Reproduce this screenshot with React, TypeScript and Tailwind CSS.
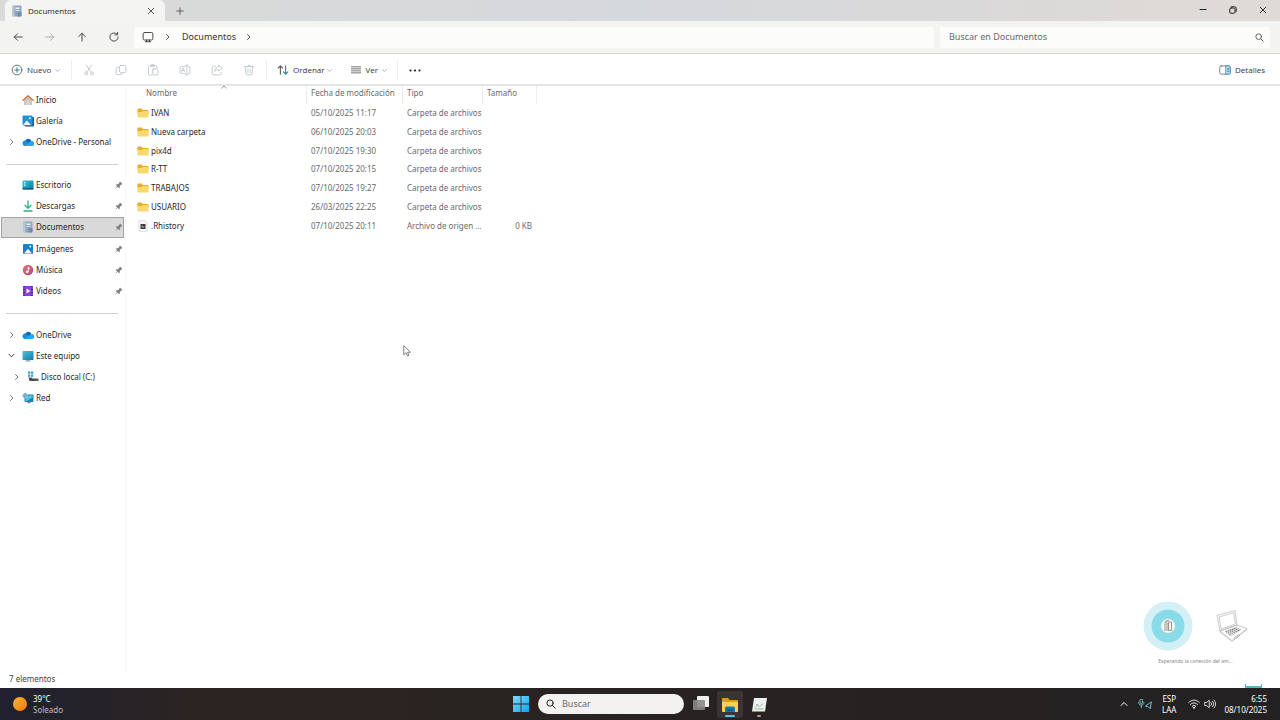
import type { ReactNode } from 'react';

type IconProps = { className?: string };

/* ---------- line icons ---------- */

function Line({ className = 'size-3', children, box = 16 }: { className?: string; children: ReactNode; box?: number }) {
  return (
    <svg
      viewBox={`0 0 ${box} ${box}`}
      className={className}
      fill="none"
      stroke="currentColor"
      strokeWidth="1.1"
      strokeLinecap="round"
      strokeLinejoin="round"
      aria-hidden="true"
    >
      {children}
    </svg>
  );
}

const BackIcon = () => <Line><path strokeWidth="1.300" d="M13.500 8H3M7.500 3.500 3 8l4.500 4.500" /></Line>;
const ForwardIcon = () => <Line><path strokeWidth="1.300" d="M2.500 8H13M8.500 3.500 13 8l-4.500 4.500" /></Line>;
const UpIcon = () => <Line><path strokeWidth="1.300" d="M8 13.500V3M3.500 7.500 8 3l4.500 4.500" /></Line>;
const RefreshIcon = () => <Line><path strokeWidth="1.300" d="M13.500 8A5.500 5.500 0 1 1 11.500 3.800M12.800 1.800v3.400H9.400" /></Line>;
const CloseIcon = ({ className = 'size-2' }: IconProps) => <Line className={className}><path strokeWidth="1.800" d="m2.500 2.500 11 11M13.500 2.500l-11 11" /></Line>;
const PlusIcon = () => <Line className="size-2"><path strokeWidth="1.600" d="M8 1.500v13M1.500 8h13" /></Line>;
const MinimizeIcon = () => <Line className="size-2"><path strokeWidth="2" d="M2 7h12" /></Line>;
const RestoreIcon = () => (
  <Line className="size-2">
    <rect x="1.500" y="4" width="10.500" height="10.500" rx="2.500" strokeWidth="2" />
    <path strokeWidth="2" d="M5 1.500h6a3.500 3.500 0 0 1 3.500 3.500v6" />
  </Line>
);
const ScreenIcon = () => (
  <Line>
    <rect x="1.500" y="2" width="13" height="10" rx="1.800" strokeWidth="1.300" />
    <path strokeWidth="1.300" d="M6 12v2.200M10 12v2.200M4.500 14.300h7" />
  </Line>
);
const ChevronRight = ({ className = 'size-2' }: IconProps) => <Line className={className}><path strokeWidth="1.800" d="m5 3 5 5-5 5" /></Line>;
const ChevronDown = ({ className = 'size-2' }: IconProps) => <Line className={className}><path strokeWidth="2" d="m2 5 6 6 6-6" /></Line>;
const ChevronUp = ({ className = 'size-2' }: IconProps) => <Line className={className}><path strokeWidth="2" d="m2 11 6-6 6 6" /></Line>;
const SearchIcon = ({ className = 'size-[9px]' }: IconProps) => (
  <Line className={className}>
    <circle cx="6.500" cy="6.500" r="5" strokeWidth="1.600" />
    <path strokeWidth="1.600" d="m10.200 10.200 4.600 4.600" />
  </Line>
);
const NewIcon = () => (
  <Line>
    <circle cx="8" cy="8" r="6.500" stroke="#555" />
    <path stroke="#277c9c" strokeWidth="1.300" d="M8 5v6M5 8h6" />
  </Line>
);
const CutIcon = () => (
  <Line>
    <circle cx="4" cy="12.500" r="2" />
    <circle cx="12" cy="12.500" r="2" />
    <path d="M5 10.800 11.500 1.500M11 10.800 4.500 1.500" />
  </Line>
);
const CopyIcon = () => (
  <Line>
    <rect x="6" y="2" width="8.500" height="9.500" rx="1.500" />
    <path d="M4.500 4.500H3A1.500 1.500 0 0 0 1.500 6v6.500A1.500 1.500 0 0 0 3 14h5a1.500 1.500 0 0 0 1.500-1" />
  </Line>
);
const PasteIcon = () => (
  <Line>
    <path d="M6 14.500H3.500A1.500 1.500 0 0 1 2 13V3.500A1.500 1.500 0 0 1 3.500 2h8A1.500 1.500 0 0 1 13 3.500V5M5.500 2V1h4v2.500h-4z" />
    <rect x="7.500" y="6.500" width="7" height="8" rx="1.300" />
  </Line>
);
const RenameIcon = () => (
  <Line>
    <path d="M8.500 3.500H3A1.500 1.500 0 0 0 1.500 5v6A1.500 1.500 0 0 0 3 12.500h5.500M12.500 3.500h.5A1.500 1.500 0 0 1 14.500 5v6a1.500 1.500 0 0 1-1.500 1.500h-.5M10.500 1.500v13M9 1.500h3M9 14.500h3M3.500 10 5.500 5.500 7.500 10M4.200 8.700h2.600" />
  </Line>
);
const ShareIcon = () => (
  <Line>
    <path d="M6 3H3.500A2 2 0 0 0 1.500 5v7.500a2 2 0 0 0 2 2h8a2 2 0 0 0 2-2V11M10 1.500l5 4-5 4V7.300c-2.600 0-4 .8-5 2.700.2-3.600 2-5.800 5-6.200z" />
  </Line>
);
const DeleteIcon = () => (
  <Line>
    <path d="M1.500 3.500h13M6 3.500a2 2 0 0 1 4 0M3 3.500l.9 9.500a1.500 1.500 0 0 0 1.500 1.500h5.200a1.500 1.500 0 0 0 1.500-1.500l.9-9.500M6.500 6.500v5M9.500 6.500v5" />
  </Line>
);
const SortIcon = () => (
  <Line>
    <path stroke="#555" strokeWidth="1.400" d="M4.500 13.500v-11M1.500 5.500l3-3 3 3" />
    <path stroke="#277c9c" strokeWidth="1.400" d="M11.500 2.500v11M8.500 10.500l3 3 3-3" />
  </Line>
);
const ViewIcon = () => (
  <svg viewBox="0 0 12 12" className="size-3" aria-hidden="true">
    <path fill="#cfcfcf" d="M1 2h10v8H1z" />
    <path stroke="#a6a6a6" d="M1 2.500h10M1 4.500h10M1 6.500h10M1 8.500h10" />
  </svg>
);
const DetailsIcon = () => (
  <Line>
    <rect x="1" y="2.500" width="14" height="11" rx="2" stroke="#666" />
    <path fill="#b9def2" stroke="#3d88b5" d="M9.500 2.500H13a2 2 0 0 1 2 2v7a2 2 0 0 1-2 2H9.500zM11.500 6H13M11.500 8H13M11.500 10H13" />
  </Line>
);
const PinIcon = () => (
  <svg viewBox="0 0 16 16" className="size-2" fill="#7d8083" aria-hidden="true">
    <path d="m10 1 5 5-1.500 1.200-1-.2-3 3 .2 3L8.200 14.500 5.300 11.600 1.500 15.200.800 14.500 4.400 10.700 1.500 7.800 3 6.300l3 .2 3-3-.2-1z" />
  </svg>
);

/* ---------- coloured icons ---------- */

const HomeIcon = () => (
  <svg viewBox="0 0 24 24" className="size-3" aria-hidden="true">
    <path fill="#c9c6c4" d="M4 11 12 4l8 7v11h-5.500v-7h-5v7H4z" />
    <path fill="#9c8e85" d="M9.500 15h5v7h-5z" opacity=".35" />
    <path fill="none" stroke="#d07a35" strokeWidth="3" strokeLinecap="round" strokeLinejoin="round" d="M2 12.500 12 3.500l10 9" />
  </svg>
);
const GalleryIcon = () => (
  <svg viewBox="0 0 24 24" className="size-3" aria-hidden="true">
    <rect x="5" y="4" width="19" height="19" rx="2" fill="#1b5e99" />
    <rect x="1" y="1" width="20" height="20" rx="2" fill="#2391d8" />
    <path fill="#e8f6fd" d="m2 20 7.500-9 8.500 9z" />
    <circle cx="15.500" cy="6.500" r="2" fill="#e8f6fd" />
  </svg>
);
const CloudIcon = () => (
  <svg viewBox="0 0 24 24" className="size-3" aria-hidden="true">
    <path fill="#1267b9" d="M7 9a6.500 6.500 0 0 1 12 1l-8 7-9-1A5 5 0 0 1 7 9z" />
    <path fill="#1490df" d="M2 12.500A5 5 0 0 1 8.500 10L19 18.500 17 20H6a5 5 0 0 1-4-7.500z" />
    <path fill="#28a8ea" d="M13 14.500 19 10a5 5 0 0 1 1 10H6z" />
  </svg>
);
const DesktopIcon = () => (
  <svg viewBox="0 0 24 24" className="size-3" aria-hidden="true">
    <defs>
      <linearGradient id="desk" x1="0" x2="1" y2="1">
        <stop stopColor="#35c6d0" />
        <stop offset="1" stopColor="#0f75a8" />
      </linearGradient>
    </defs>
    <rect x="1" y="3" width="22" height="18" rx="2" fill="url(#desk)" />
    <path fill="#c5f3f5" d="M4 6h3v3H4zM4 11h3v3H4z" />
    <path fill="#0d5f86" d="M1 18h22v1.500a1.500 1.500 0 0 1-1.500 1.500h-19A1.500 1.500 0 0 1 1 19.500z" />
  </svg>
);
const DownloadIcon = () => (
  <svg viewBox="0 0 24 24" className="size-3" fill="none" stroke="#2fb281" strokeWidth="2.600" strokeLinecap="round" strokeLinejoin="round" aria-hidden="true">
    <path d="M12 2v14M6 10.500l6 6 6-6M4 22h16" />
  </svg>
);
const DocumentIcon = ({ className = 'size-3' }: IconProps) => (
  <svg viewBox="0 0 24 24" className={className} aria-hidden="true">
    <rect x="3" y="1" width="18" height="22" rx="2" fill="#91a8c0" />
    <rect x="3" y="1" width="4" height="22" rx="1.500" fill="#b5c6d6" />
    <path fill="#e7f1f9" d="M9 5h8v3H9zM9 10h8v1.500H9z" />
    <path fill="#6f8cab" d="M13 14h8v7a2 2 0 0 1-2 2h-6z" />
  </svg>
);
const PicturesIcon = () => (
  <svg viewBox="0 0 24 24" className="size-3" aria-hidden="true">
    <rect x="2" y="2" width="20" height="20" rx="2.500" fill="#1c80c3" />
    <path fill="#f0f9fe" d="m4 21 8-9.500L20 21z" />
    <circle cx="16.500" cy="7" r="2" fill="#f0f9fe" />
  </svg>
);
const MusicIcon = () => (
  <svg viewBox="0 0 24 24" className="size-3" aria-hidden="true">
    <defs>
      <linearGradient id="music" x1="0" x2="1" y2="1">
        <stop stopColor="#e2716b" />
        <stop offset="1" stopColor="#b04b86" />
      </linearGradient>
    </defs>
    <circle cx="12" cy="12" r="10.500" fill="url(#music)" />
    <circle cx="10.500" cy="15.500" r="2.700" fill="#fff" />
    <path fill="#fff" d="M11.500 5.500h1.700c.3 1.800 1.200 2.700 3 3v2c-1.300 0-2.300-.4-3-1v6h-1.700z" />
  </svg>
);
const VideosIcon = () => (
  <svg viewBox="0 0 24 24" className="size-3" aria-hidden="true">
    <rect x="2" y="2" width="20" height="20" rx="2" fill="#8a3ed6" />
    <path fill="#5a1ea6" d="M2 4a2 2 0 0 1 2-2h2v20H4a2 2 0 0 1-2-2zM18 2h2a2 2 0 0 1 2 2v16a2 2 0 0 1-2 2h-2z" />
    <path fill="#e3c8fb" d="M3 5h2v2H3zM3 11h2v2H3zM3 17h2v2H3zM19 5h2v2h-2zM19 11h2v2h-2zM19 17h2v2h-2z" />
    <path fill="#fff" d="m9 7 8 5-8 5z" />
  </svg>
);
const ComputerIcon = () => (
  <svg viewBox="0 0 24 24" className="size-3" aria-hidden="true">
    <defs>
      <linearGradient id="pc" x1="0" x2="1" y2="1">
        <stop stopColor="#45c9da" />
        <stop offset="1" stopColor="#1478a6" />
      </linearGradient>
    </defs>
    <rect x="1" y="2" width="22" height="18" rx="1.500" fill="url(#pc)" />
    <path fill="#8fa6b2" d="M9 20h6v1.500h3V23H6v-1.500h3z" />
  </svg>
);
const DiskIcon = () => (
  <svg viewBox="0 0 24 24" className="size-3" aria-hidden="true">
    <path fill="#27a3dd" d="M2 1h4.500v4.500H2zM8 1h4.500v4.500H8zM2 7h4.500v4.500H2zM8 7h4.500v4.500H8z" />
    <path fill="#4a4f53" d="M3 13h6l2 2h12v5H5z" />
    <path fill="#54d08b" d="M18 17h3v1.500h-3z" />
  </svg>
);
const NetworkIcon = () => (
  <svg viewBox="0 0 24 24" className="size-3" aria-hidden="true">
    <rect x="5" y="5" width="18" height="15" rx="1.500" fill="#1c87b5" />
    <path fill="#52c6dc" d="M7 7h14v4L10 18H7z" />
    <circle cx="6.500" cy="7.500" r="5.500" fill="#a4d4e6" />
    <path fill="none" stroke="#367fa8" d="M1 7.500h11M6.500 2c-3 3.500-3 7.500 0 11M6.500 2c3 3.500 3 7.500 0 11" />
    <path fill="#6d8796" d="M11 20h6v2.500h-6z" />
  </svg>
);
const FolderIcon = () => (
  <svg viewBox="0 0 24 24" className="size-3" aria-hidden="true">
    <path fill="#e3ac2c" d="M1 4.500A1.500 1.500 0 0 1 2.500 3h6.500l2.500 3H21.500A1.500 1.500 0 0 1 23 7.500V13H1z" />
    <path fill="#fbd86b" d="M1 10h8l2.500-2H23v11.500a1.500 1.500 0 0 1-1.500 1.500h-19A1.500 1.500 0 0 1 1 19.500z" />
  </svg>
);
const FileIcon = () => (
  <svg viewBox="0 0 24 24" className="size-3" aria-hidden="true">
    <path fill="#fafafa" stroke="#b9b9b9" d="M4 1.500h12l4 4v17H4z" />
    <path fill="#36393b" d="M7 8h10v10H7z" />
    <path fill="#a5adb2" d="M9 10.500h2v5H9zM12.500 12h2v3.500h-2z" />
  </svg>
);

/* ---------- data ---------- */

type NavEntry = { label: string; icon: ReactNode; pinned?: boolean; chevron?: 'right' | 'down'; nested?: boolean; active?: boolean };

const topLinks: NavEntry[] = [
  { label: 'Inicio', icon: <HomeIcon /> },
  { label: 'Galería', icon: <GalleryIcon /> },
  { label: 'OneDrive - Personal', icon: <CloudIcon />, chevron: 'right' },
];
const quickLinks: NavEntry[] = [
  { label: 'Escritorio', icon: <DesktopIcon />, pinned: true },
  { label: 'Descargas', icon: <DownloadIcon />, pinned: true },
  { label: 'Documentos', icon: <DocumentIcon />, pinned: true, active: true },
  { label: 'Imágenes', icon: <PicturesIcon />, pinned: true },
  { label: 'Música', icon: <MusicIcon />, pinned: true },
  { label: 'Videos', icon: <VideosIcon />, pinned: true },
];
const deviceLinks: NavEntry[] = [
  { label: 'OneDrive', icon: <CloudIcon />, chevron: 'right' },
  { label: 'Este equipo', icon: <ComputerIcon />, chevron: 'down' },
  { label: 'Disco local (C:)', icon: <DiskIcon />, chevron: 'right', nested: true },
  { label: 'Red', icon: <NetworkIcon />, chevron: 'right' },
];

const files = [
  { name: 'IVAN', date: '05/10/2025 11:17', type: 'Carpeta de archivos', size: '' },
  { name: 'Nueva carpeta', date: '06/10/2025 20:03', type: 'Carpeta de archivos', size: '' },
  { name: 'pix4d', date: '07/10/2025 19:30', type: 'Carpeta de archivos', size: '' },
  { name: 'R-TT', date: '07/10/2025 20:15', type: 'Carpeta de archivos', size: '' },
  { name: 'TRABAJOS', date: '07/10/2025 19:27', type: 'Carpeta de archivos', size: '' },
  { name: 'USUARIO', date: '26/03/2025 22:25', type: 'Carpeta de archivos', size: '' },
  { name: '.Rhistory', date: '07/10/2025 20:11', type: 'Archivo de origen ...', size: '0 KB' },
];

const fileActions = [
  { label: 'Cortar', icon: <CutIcon /> },
  { label: 'Copiar', icon: <CopyIcon /> },
  { label: 'Pegar', icon: <PasteIcon /> },
  { label: 'Cambiar nombre', icon: <RenameIcon /> },
  { label: 'Compartir', icon: <ShareIcon /> },
  { label: 'Eliminar', icon: <DeleteIcon /> },
];

/* ---------- window parts ---------- */

function TitleBar() {
  return (
    <header className="flex h-[21px] items-stretch bg-linear-to-r from-[#dadad8] via-[#d5d8dc] to-[#dfdad6] font-['Open_Sans','Noto_Sans',sans-serif]">
      <div className="ml-[5px] flex w-40 items-center rounded-t-md bg-[#f4f5f3] pr-2 pl-1.5">
        <DocumentIcon className="size-3" />
        <span className="ml-[5px] flex-1 font-medium text-[#222]">Documentos</span>
        <button aria-label="Cerrar pestaña" className="p-0.5 text-[#444]"><CloseIcon /></button>
      </div>
      <button aria-label="Nueva pestaña" className="px-[11px] text-[#444]"><PlusIcon /></button>
      <div className="ml-auto flex items-stretch pb-0.5 text-[#222]">
        <button aria-label="Minimizar" className="w-[30px] pl-[11px]"><MinimizeIcon /></button>
        <button aria-label="Restaurar" className="w-[30px] pl-[11px]"><RestoreIcon /></button>
        <button aria-label="Cerrar" className="w-[32px] pl-[11px]"><CloseIcon /></button>
      </div>
    </header>
  );
}

function AddressBar() {
  return (
    <div className="flex h-[33px] items-center border-b border-[#d9d9d9] bg-[#f3f4f2] pr-2.5 text-[9px]">
      <nav aria-label="Historial" className="flex w-[134px] items-center gap-5 pl-3 text-[#444]">
        <button aria-label="Atrás"><BackIcon /></button>
        <button aria-label="Adelante" className="text-[#aaa]" disabled><ForwardIcon /></button>
        <button aria-label="Subir"><UpIcon /></button>
        <button aria-label="Actualizar"><RefreshIcon /></button>
      </nav>
      <div className="mr-1.5 flex h-[21px] flex-1 items-center rounded-xs bg-[#fcfdfb] pl-2 text-[#444]">
        <ScreenIcon />
        <ChevronRight className="mr-[10px] ml-2.5 size-2" />
        <a href="#documentos" className="text-[#333]">Documentos</a>
        <ChevronRight className="ml-[9px] size-2" />
      </div>
      <label className="flex h-[21px] w-[330px] items-center rounded-xs bg-[#fcfdfa] pr-1.5 pl-[9px] text-[#555]">
        <input
          type="search"
          aria-label="Buscar en Documentos"
          placeholder="Buscar en Documentos"
          className="min-w-0 flex-1 bg-transparent outline-none placeholder:text-[#686868]"
        />
        <SearchIcon />
      </label>
    </div>
  );
}

function Toolbar() {
  return (
    <div role="toolbar" aria-label="Comandos" className="flex h-8 items-center border-b-2 border-[#e4e4e4] pt-0.5 pr-[15px] font-['Open_Sans','Noto_Sans',sans-serif] font-medium text-[#333]">
      <button className="flex w-[71px] items-center pl-[11px]">
        <NewIcon />
        <span className="ml-1">Nuevo</span>
        <ChevronDown className="ml-1 size-[5px] text-[#888]" />
      </button>
      <div className="flex items-center gap-5 border-x border-[#ececec] px-[11px] py-1 text-[#b9c2c8]">
        {fileActions.map((action) => (
          <button key={action.label} aria-label={action.label} disabled>{action.icon}</button>
        ))}
      </div>
      <button className="ml-2.5 flex items-center">
        <SortIcon />
        <span className="ml-1">Ordenar</span>
        <ChevronDown className="ml-0.5 size-[5px] text-[#888]" />
      </button>
      <button className="ml-[18px] flex items-center">
        <ViewIcon />
        <span className="ml-1">Ver</span>
        <ChevronDown className="ml-1 size-[5px] text-[#888]" />
      </button>
      <button aria-label="Ver más" className="ml-2.5 border-l border-[#f0f0f0] py-1 pl-[11px]">
        <svg viewBox="0 0 12 12" className="size-3 fill-[#222]" aria-hidden="true">
          <circle cx="1.500" cy="6.500" r="1.100" />
          <circle cx="6" cy="6.500" r="1.100" />
          <circle cx="10.500" cy="6.500" r="1.100" />
        </svg>
      </button>
      <button className="ml-auto flex items-center gap-1">
        <DetailsIcon />
        Detalles
      </button>
    </div>
  );
}

function NavLink({ entry }: { entry: NavEntry }) {
  return (
    <li className={`flex min-h-0 ${entry.active ? 'border border-[#a3a3a3] bg-[#d9d9d9]' : 'border border-transparent'}`}>
      <a href={`#${entry.label}`} className={`flex flex-1 items-center ${entry.nested ? 'pl-2.5' : 'pl-[5px]'}`}>
        <span className="w-[15px] pl-px text-[#666]">
          {entry.chevron === 'right' && <ChevronRight />}
          {entry.chevron === 'down' && <ChevronDown className="size-[7px] text-[#222]" />}
        </span>
        {entry.icon}
        <span className="ml-0.5 flex-1 whitespace-nowrap">{entry.label}</span>
        {entry.pinned && <PinIcon />}
      </a>
    </li>
  );
}

function Sidebar() {
  return (
    <nav aria-label="Panel de navegación" className="w-[126px] shrink-0 border-r border-[#f8f8f8] pt-[3px] pr-px pl-px text-[#1f1f1f]">
      <ul className="grid h-16 grid-rows-3">
        {topLinks.map((entry) => <NavLink key={entry.label} entry={entry} />)}
      </ul>
      <hr className="mt-[11px] mr-1.5 mb-[9px] ml-[5px] border-[#d0d0d0]" />
      <ul className="grid h-32 grid-rows-6">
        {quickLinks.map((entry) => <NavLink key={entry.label} entry={entry} />)}
      </ul>
      <hr className="mt-[11px] mr-1.5 mb-[10px] ml-[5px] border-[#d0d0d0]" />
      <ul className="grid h-[85px] grid-rows-4">
        {deviceLinks.map((entry) => <NavLink key={entry.label} entry={entry} />)}
      </ul>
    </nav>
  );
}

function FileTable() {
  return (
    <table className="h-[149px] w-[411px] table-fixed border-separate border-spacing-0 text-left text-[#6a6a6a]">
      <colgroup>
        <col className="w-[181px]" />
        <col className="w-24" />
        <col className="w-20" />
        <col className="w-[54px]" />
      </colgroup>
      <thead>
        <tr className="h-[18px]">
          <th className="relative border-r border-[#ededed] pb-1 pl-5 font-normal">
            Nombre
            <ChevronUp className="absolute -top-0.5 left-[95px] size-[6px] text-[#777]" />
          </th>
          <th className="border-r border-[#ededed] pb-1 pl-1 font-normal whitespace-nowrap">Fecha de modificación</th>
          <th className="border-r border-[#ededed] pb-1 pl-1 font-normal">Tipo</th>
          <th className="border-r border-[#ededed] pb-1 pl-1 font-normal">Tamaño</th>
        </tr>
      </thead>
      <tbody>
        {files.map((file) => (
          <tr key={file.name}>
            <td className="pl-[11px] text-[#1f1f1f]">
              <span className="flex items-center gap-0.5">
                {file.size ? <FileIcon /> : <FolderIcon />}
                {file.name}
              </span>
            </td>
            <td className="pl-1 whitespace-nowrap">{file.date}</td>
            <td className="pl-1 whitespace-nowrap">{file.type}</td>
            <td className="pr-[5px] text-right">{file.size}</td>
          </tr>
        ))}
      </tbody>
    </table>
  );
}

function Pointer() {
  return (
    <svg viewBox="0 0 16 24" className="absolute top-[259px] left-[403px] h-3 w-2" fill="#fff" stroke="#555" strokeWidth="1.500" aria-hidden="true">
      <path d="M1.500 1.500v18l4.500-4 3 6.500 3-1.500-3-6h6z" />
    </svg>
  );
}

function ConnectionNotice() {
  return (
    <div className="absolute right-8 bottom-[7px] flex flex-col items-center">
      <div className="flex items-center gap-[23px]">
        <svg viewBox="0 0 50 50" className="size-[50px]" aria-hidden="true">
          <circle cx="25" cy="25" r="24.500" fill="#d3f0f6" />
          <circle cx="25" cy="25" r="16.500" fill="#8adbe8" />
          <circle cx="25" cy="25" r="7" fill="#f5f5f3" />
          <path fill="none" stroke="#857f7b" strokeWidth=".8" d="M22 21v9M24 20.500v9.500M25.500 21h3v8.500h-3zM22 20.500l4-1.200" />
        </svg>
        <svg viewBox="0 0 32 32" className="size-8" fill="none" stroke="#aaa" strokeWidth=".6" strokeLinejoin="round" aria-hidden="true">
          <path d="M1 5.500 19 .500l2 14.500L4 21zM3 7l14.700-4.200L19.400 14 5 19.200z" />
          <path d="m4 21 17-6 10 3.500L16 30.500zM4 21v1l12 9.500 15-12v-1" />
          <path d="m9 21.500 11-4 5 2-10 6.500z" />
          <path stroke="#777" strokeWidth="1.200" strokeDasharray="1.400 .8" d="m10 22 10.500-4M12 23l10.500-4.300M13.500 24.500 24 19.700" />
          <path d="m18 27.500 4-2.800 2 .8-4 3z" />
        </svg>
      </div>
      <p className="mt-1.5 text-[5px] leading-2 text-[#888]">Esperando la conexión del am...</p>
    </div>
  );
}

/* ---------- taskbar ---------- */

const StartIcon = () => (
  <svg viewBox="0 0 16 16" className="size-4" aria-hidden="true">
    <defs>
      <linearGradient id="start" x1="0" x2="1" y2="1">
        <stop stopColor="#7ddcff" />
        <stop offset="1" stopColor="#16a0ea" />
      </linearGradient>
    </defs>
    <path fill="url(#start)" d="M0 0h7.600v7.600H0zM8.400 0H16v7.600H8.400zM0 8.400h7.600V16H0zM8.400 8.400H16V16H8.400z" />
  </svg>
);
const TaskViewIcon = () => (
  <svg viewBox="0 0 16 16" className="size-4" aria-hidden="true">
    <rect x="4" y="0" width="12" height="11" rx="1" fill="#f1f1f1" />
    <rect x="0" y="4" width="12" height="10" rx="1" fill="#8b8885" opacity=".9" />
  </svg>
);
const ExplorerIcon = () => (
  <svg viewBox="0 0 18 18" className="size-[18px]" aria-hidden="true">
    <path fill="#dd9b1e" d="M1 2a1 1 0 0 1 1-1h5l1.500 2H16a1 1 0 0 1 1 1v3H1z" />
    <path fill="#fcd253" d="M1 5h16v9a1 1 0 0 1-1 1H2a1 1 0 0 1-1-1z" />
    <path fill="#1476ae" d="M4 15v-4a1.500 1.500 0 0 1 1.500-1.500h7A1.500 1.500 0 0 1 14 11v4z" />
    <path fill="#0c4f7d" d="M6.500 12.500h5v1.300h-5z" />
  </svg>
);
const EditorIcon = () => (
  <svg viewBox="0 0 16 16" className="size-4" aria-hidden="true">
    <path fill="#eef1ef" d="M3 1h13l-2 13.500H1z" />
    <path fill="none" stroke="#8ea4aa" strokeWidth=".8" d="m4 10.500 2.500-2.500 2 1.500L12 6.500M5 7.500h2" />
    <path fill="none" stroke="#76ad6b" strokeWidth=".8" d="M3.500 12h9" />
  </svg>
);

function Taskbar() {
  return (
    <footer className="flex h-8 items-center bg-linear-to-r from-[#20202f] via-[#2b2422] via-15% to-[#242122] text-white">
      <button className="flex flex-1 items-center gap-1.5 pl-[13px] text-left leading-[11px]">
        <svg viewBox="0 0 14 14" className="size-3.5" aria-hidden="true">
          <defs>
            <linearGradient id="sun" x1="0" x2="1" y2="1">
              <stop stopColor="#fdb934" />
              <stop offset="1" stopColor="#ee7414" />
            </linearGradient>
          </defs>
          <circle cx="7" cy="7" r="7" fill="url(#sun)" />
        </svg>
        <span>
          <span className="block">39°C</span>
          <span className="block text-[#bdbdbf]">Soleado</span>
        </span>
      </button>
      <div className="flex items-center">
        <button aria-label="Inicio" className="mr-[9px]"><StartIcon /></button>
        <label className="mr-[9px] flex h-5 w-[146px] items-center gap-1.5 rounded-full bg-[#f3f2f1] pl-2 text-[9px] text-[#222]">
          <SearchIcon className="size-2.5" />
          <input type="search" aria-label="Buscar" placeholder="Buscar" className="w-24 bg-transparent outline-none placeholder:text-[#6b6b6b]" />
        </label>
        <button aria-label="Vista de tareas"><TaskViewIcon /></button>
        <button aria-label="Explorador de archivos" className="ml-2 flex h-[27px] w-[26px] flex-col items-center rounded-xs bg-[#3a3534] pt-1.5">
          <ExplorerIcon />
          <span className="h-0.5 w-2.5 rounded-full bg-[#5cc0ee]" />
        </button>
        <button aria-label="Editor" className="ml-2 flex h-[27px] flex-col items-center justify-end gap-0.5 pb-px">
          <EditorIcon />
          <span className="h-0.5 w-1 rounded-full bg-[#a3a09f]" />
        </button>
      </div>
      <div className="flex flex-1 items-center justify-end pr-[13px] leading-[11px]">
        <button aria-label="Mostrar iconos ocultos"><ChevronUp /></button>
        <svg viewBox="0 0 28 20" className="ml-2.5 h-2.5 w-3.5" fill="none" stroke="#6fc4d2" strokeWidth="2" strokeLinecap="round" strokeLinejoin="round" aria-hidden="true">
          <rect x="4" y="0" width="5" height="9" rx="2.500" />
          <path d="M1 7c0 7 11 7 11 0M6.500 12.500V17M26 6 15 14l5.500 1.500L24 19z" />
        </svg>
        <button className="ml-2.5 text-center">
          <span className="block">ESP</span>
          <span className="block">LAA</span>
        </button>
        <button aria-label="Red y volumen" className="ml-3 flex items-center gap-1">
          <svg viewBox="0 0 24 20" className="h-2.5 w-3" fill="none" stroke="#fff" strokeWidth="1.800" strokeLinecap="round" aria-hidden="true">
            <path d="M1.500 7c6-6.500 15-6.500 21 0M5 11c4-4.500 10-4.500 14 0M8.500 14.500c2-2.300 5-2.300 7 0" />
            <circle cx="12" cy="17.500" r="1.200" fill="#fff" />
          </svg>
          <svg viewBox="0 0 24 20" className="h-2.5 w-3" fill="none" stroke="#fff" strokeWidth="1.600" strokeLinecap="round" strokeLinejoin="round" aria-hidden="true">
            <path d="M1.500 7v6H5l5.500 4.500v-15L5 7zM14 7c1.500 2 1.500 4 0 6M17 4.500c3 3.500 3 7.500 0 11M20 2c4.200 5 4.200 11 0 16" />
          </svg>
        </button>
        <button className="ml-2 text-right">
          <span className="block">6:55</span>
          <span className="block">08/10/2025</span>
        </button>
      </div>
    </footer>
  );
}

export default function App() {
  return (
    <div className="flex min-h-screen flex-col bg-white font-['Noto_Sans','Open_Sans',sans-serif] text-[8px] leading-3">
      <TitleBar />
      <AddressBar />
      <Toolbar />
      <div className="relative flex flex-1">
        <Sidebar />
        <main className="flex-1">
          <FileTable />
        </main>
        <Pointer />
        <ConnectionNotice />
      </div>
      <div className="flex h-4 items-start justify-between pr-[18px] pl-[9px] text-[#444]">
        <span className="pt-px">7 elementos</span>
        <span className="h-1 w-[17px] self-end border border-t-0 border-b-2 border-[#55b7c7]" />
      </div>
      <Taskbar />
    </div>
  );
}
